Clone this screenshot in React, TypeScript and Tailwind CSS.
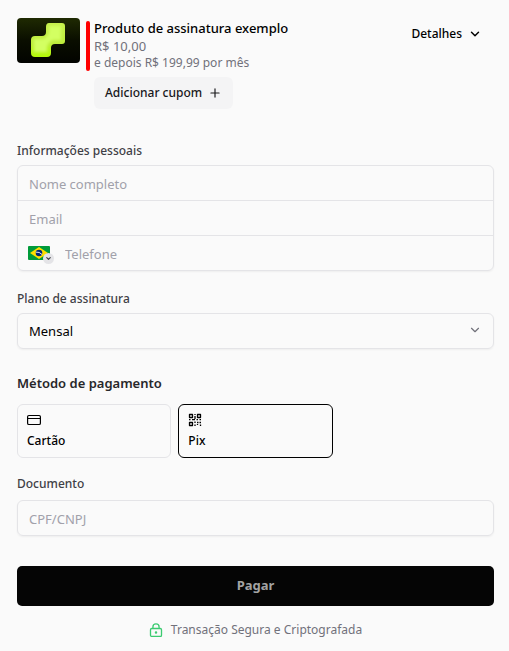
import { useState } from "react";
import type { ReactNode } from "react";
import { ChevronDown, Plus } from "lucide-react";
import clsx from "clsx";

function ProductImage() {
  return (
    <svg viewBox="0 0 63 45" className="h-[45px] w-[63px] shrink-0 rounded" role="img" aria-label="Produto">
      <defs>
        <linearGradient id="cover" x1="0" y1="0" x2="0" y2="1">
          <stop offset="0" stopColor="#1f2a02" />
          <stop offset="0.5" stopColor="#0a0e00" />
          <stop offset="1" stopColor="#020300" />
        </linearGradient>
        <linearGradient id="shape" x1="0" y1="0" x2="0" y2="1">
          <stop offset="0" stopColor="#c6f04c" />
          <stop offset="0.6" stopColor="#bdec3c" />
          <stop offset="1" stopColor="#b4fa08" />
        </linearGradient>
        <filter id="soft" x="-30%" y="-30%" width="160%" height="160%">
          <feGaussianBlur stdDeviation="1.8" />
        </filter>
      </defs>
      <rect width="63" height="45" fill="url(#cover)" />
      <path
        d="M32 5H45Q48 5 48 8V23Q48 26 45 26H38Q34 26 34 30V35Q34 39 30 39H18Q14 39 14 35V22Q14 18 18 18H25Q29 18 29 14V9Q29 5 32 5Z"
        fill="url(#shape)"
      />
      <path d="M32 8H44V22H36Q31 24 30 29V34H17V21H26Q31 19 32 14Z" fill="#d3ff62" filter="url(#soft)" />
    </svg>
  );
}

function BrazilFlag() {
  return (
    <svg viewBox="0 0 22 14" className="h-[14px] w-[22px] rounded-[1px]" aria-hidden="true">
      <rect width="22" height="14" fill="#009b3a" />
      <path d="M11 1L20 7L11 13L2 7Z" fill="#fedf00" />
      <circle cx="11" cy="7" r="3.3" fill="#002776" />
      <path d="M7.8 6.1Q11.4 5.6 14 8.5" fill="none" stroke="#fff" strokeWidth="0.9" />
    </svg>
  );
}

function CardIcon() {
  return (
    <svg viewBox="0 0 14 14" className="h-[14px] w-[14px]" fill="none" stroke="currentColor" aria-hidden="true">
      <rect x="0.6" y="2.5" width="12.8" height="9" rx="1.3" strokeWidth="1.2" />
      <path d="M0.6 5.5H13.4" />
    </svg>
  );
}

function PixIcon() {
  return (
    <svg
      viewBox="0 0 14 14"
      className="h-[14px] w-[14px]"
      fill="none"
      stroke="currentColor"
      strokeWidth="1.3"
      aria-hidden="true"
    >
      <path d="M1.5 1.5h3v3h-3zM9.5 1.5h3v3h-3zM1.5 9.5h3v3h-3z" strokeLinejoin="round" />
      <path d="M7 1v1M7 3v3M1 6.6h1.5M4 6.6h3M8.5 6.6h1.5M11.5 6.6h1.5M7 8.5v1.5M7 11.5v1.5M9 9.5h1.5M11.5 9.5h1.5M9.5 11v1M12.5 11.5v1.5" />
    </svg>
  );
}

function LockIcon() {
  return (
    <svg
      viewBox="0 0 14 14"
      className="h-[14px] w-[14px] text-[#3ccb71]"
      fill="none"
      stroke="currentColor"
      strokeWidth="1.3"
      strokeLinecap="round"
      strokeLinejoin="round"
      aria-hidden="true"
    >
      <rect x="1.5" y="5.5" width="11" height="8" rx="1.3" />
      <path d="M3.9 5.3V4a3.1 3.1 0 0 1 6.2 0v1.3" />
      <circle cx="7" cy="9.5" r="0.6" fill="currentColor" />
    </svg>
  );
}

type MethodCardProps = {
  value: string;
  label: string;
  icon: ReactNode;
  selected: boolean;
  onSelect: (value: string) => void;
};

function MethodCard({ value, label, icon, selected, onSelect }: MethodCardProps) {
  return (
    <label
      className={clsx(
        "flex h-[54px] cursor-pointer flex-col gap-1.5 rounded-md border px-[9px] pt-2 text-[12px] leading-4 font-medium text-black",
        selected ? "border-black" : "border-[#e4e4e7]"
      )}
    >
      <input
        type="radio"
        name="method"
        value={value}
        checked={selected}
        onChange={() => onSelect(value)}
        className="sr-only"
      />
      {icon}
      <span>{label}</span>
    </label>
  );
}

const labelClass = "block text-[12px] leading-5 font-medium text-[#3f3f46]";
const inputClass =
  "block h-[34px] w-full bg-transparent px-[11px] pt-0.5 text-[13px] text-black outline-none placeholder:text-[#a1a1aa]";

export default function App() {
  const [method, setMethod] = useState("pix");

  return (
    <main className="min-h-screen bg-[#fafafa] pt-[18px] pr-[15px] pb-3 pl-[17px] font-['Noto_Sans',sans-serif] text-black">
      <header className="flex items-start">
        <ProductImage />
        <div className="mt-[3px] ml-[6px] h-[50px] w-1 shrink-0 rounded-sm bg-[#ff0000]" />
        <div className="ml-1 min-w-0 flex-1">
          <h1 className="text-[13px] leading-5 font-medium">Produto de assinatura exemplo</h1>
          <p className="text-[13px] leading-4 text-[#71717a]">R$ 10,00</p>
          <p className="text-[12px] leading-[17px] text-[#71717a]">e depois R$ 199,99 por mês</p>
          <button
            type="button"
            className="mt-1.5 flex h-8 items-center gap-1.5 rounded-md bg-[#f4f4f5] px-[11px] text-[12px] font-medium text-[#18181b]"
          >
            Adicionar cupom
            <Plus className="h-[14px] w-[14px]" strokeWidth={2} />
          </button>
        </div>
        <button type="button" className="mt-1.5 mr-3 flex items-center gap-1.5 text-[12px] leading-5 font-medium">
          Detalhes
          <ChevronDown className="h-[14px] w-[14px]" strokeWidth={2.5} />
        </button>
      </header>

      <form className="mt-8" onSubmit={(e) => e.preventDefault()}>
        {/* Informações pessoais */}
        <fieldset>
          <legend className={labelClass}>Informações pessoais</legend>
          <div className="mt-1 divide-y divide-[#e4e4e7] rounded-md border border-[#e4e4e7] shadow-xs">
            <div>
              <input className={inputClass} aria-label="Nome completo" placeholder="Nome completo" />
            </div>
            <div>
              <input type="email" className={inputClass} aria-label="Email" placeholder="Email" />
            </div>
            <div className="flex items-center">
              <button type="button" aria-label="País" className="relative mr-1 ml-[10px] shrink-0">
                <BrazilFlag />
                <span className="absolute -right-1 -bottom-1 flex h-[11px] w-[11px] items-center justify-center rounded-full bg-[#e4e4e7]">
                  <ChevronDown className="h-[7px] w-[7px] text-[#3f3f46]" strokeWidth={4} />
                </span>
              </button>
              <input type="tel" className={inputClass} aria-label="Telefone" placeholder="Telefone" />
            </div>
          </div>
        </fieldset>

        {/* Plano */}
        <div className="mt-[18px]">
          <label htmlFor="plan" className={labelClass}>
            Plano de assinatura
          </label>
          <div className="relative mt-1">
            <select
              id="plan"
              className="block h-9 w-full appearance-none rounded-md border border-[#e4e4e7] bg-transparent px-[11px] pt-0.5 text-[13px] shadow-xs outline-none"
            >
              <option>Mensal</option>
            </select>
            <ChevronDown className="pointer-events-none absolute top-[10px] right-3 h-[14px] w-[14px] text-[#71717a]" />
          </div>
        </div>

        {/* Método de pagamento */}
        <fieldset className="mt-6">
          <legend className="text-[13px] leading-5 font-semibold text-[#27272a]">Método de pagamento</legend>
          <div className="mt-[11px] grid grid-cols-3 gap-[7px]">
            <MethodCard
              value="card"
              label="Cartão"
              icon={<CardIcon />}
              selected={method === "card"}
              onSelect={setMethod}
            />
            <MethodCard
              value="pix"
              label="Pix"
              icon={<PixIcon />}
              selected={method === "pix"}
              onSelect={setMethod}
            />
          </div>
        </fieldset>

        {/* Documento */}
        <div className="mt-4">
          <label htmlFor="document" className={labelClass}>
            Documento
          </label>
          <div className="mt-1.5 rounded-md border border-[#e4e4e7] shadow-xs">
            <input id="document" className={inputClass} placeholder="CPF/CNPJ" />
          </div>
        </div>

        <button
          type="submit"
          className="mt-[30px] h-10 w-full rounded-[5px] bg-[#050505] text-[13px] font-bold text-[#a3a3a3]"
        >
          Pagar
        </button>
      </form>

      <p className="mt-3 flex items-center justify-center gap-2 text-[12px] leading-6 text-[#71717a]">
        <LockIcon />
        Transação Segura e Criptografada
      </p>
    </main>
  );
}
